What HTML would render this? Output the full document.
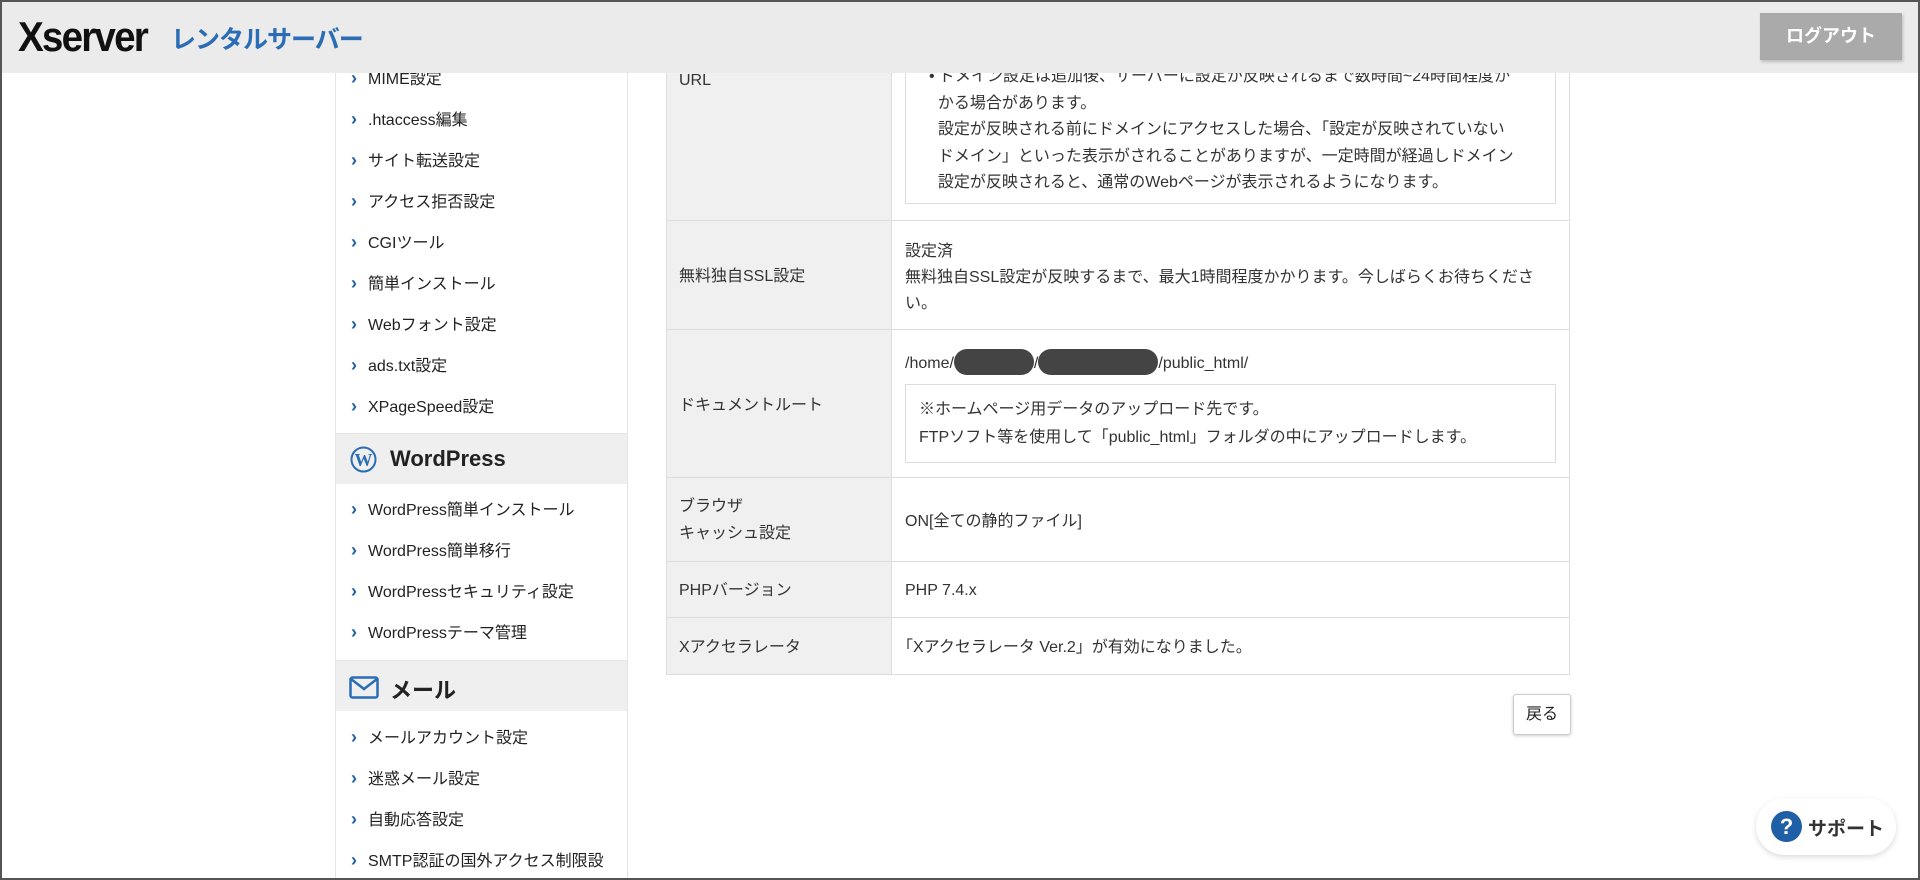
<!DOCTYPE html>
<html><head><meta charset="utf-8"><style>
*{box-sizing:border-box;margin:0;padding:0}
body{width:1920px;height:880px;overflow:hidden;background:#fff;font-family:"Liberation Sans","Noto Sans CJK JP",sans-serif;color:#333;position:relative;font-size:16px}
.frame{position:absolute;inset:0;border:2px solid #555;z-index:50;pointer-events:none}
.hdr{position:absolute;left:0;top:0;width:1920px;height:73px;background:#ebebeb;z-index:10}
.logo1{position:absolute;left:18px;top:13px;font-size:42px;font-weight:bold;color:#111;letter-spacing:-2px;transform:scaleX(0.92);transform-origin:left}
.logo2{position:absolute;left:171px;top:20px;font-size:25px;font-weight:bold;color:#2a6db5;letter-spacing:-1px}
.logout{position:absolute;left:1760px;top:13px;width:142px;height:47px;background:#aaa;color:#fff;font-weight:bold;font-size:18px;text-align:center;line-height:47px;box-shadow:1px 2px 3px rgba(0,0,0,.2)}
.side{position:absolute;left:335px;top:0;width:293px;height:880px;border-left:1px solid #e5e5e5;border-right:1px solid #e5e5e5}
.it{position:absolute;left:32px;font-size:16px;color:#222;line-height:20px}
.it:before{content:"›";position:absolute;left:-17px;top:-2px;color:#1f5fa6;font-weight:bold;font-size:18px}
.sh{position:absolute;left:0;width:291px;height:51px;background:#efefef;font-size:22px;font-weight:bold;color:#222}
.sh span{position:absolute;left:54px;top:12px}
.row{position:absolute;left:666px;width:904px;border:1px solid #ddd;border-top:none}
.th{position:absolute;left:0;top:0;bottom:0;width:225px;background:#f0f0f0;border-right:1px solid #ddd}
.tx{position:absolute;font-size:16px;color:#333;white-space:nowrap;line-height:20px}
.box{position:absolute;border:1px solid #ddd;background:#fff}
</style></head><body>
<div class="frame"></div>
<div class="hdr">
<div class="logo1">Xserver</div>
<div class="logo2">レンタルサーバー</div>
<div class="logout">ログアウト</div>
</div>

<div class="side">
<div class="it" style="top:70px">MIME設定</div>
<div class="it" style="top:111px">.htaccess編集</div>
<div class="it" style="top:152px">サイト転送設定</div>
<div class="it" style="top:193px">アクセス拒否設定</div>
<div class="it" style="top:234px">CGIツール</div>
<div class="it" style="top:275px">簡単インストール</div>
<div class="it" style="top:316px">Webフォント設定</div>
<div class="it" style="top:357px">ads.txt設定</div>
<div class="it" style="top:398px">XPageSpeed設定</div>
<div class="sh" style="top:433px;border-top:1px solid #e5e5e5"><svg style="position:absolute;left:14px;top:12px" width="27" height="27" viewBox="0 0 27 27"><circle cx="13.5" cy="13.5" r="12" fill="none" stroke="#2a6db5" stroke-width="2"/><text x="13.5" y="20" font-family="Liberation Serif,serif" font-size="18" font-weight="bold" fill="#2a6db5" text-anchor="middle">W</text></svg><span>WordPress</span></div>
<div class="it" style="top:501px">WordPress簡単インストール</div>
<div class="it" style="top:542px">WordPress簡単移行</div>
<div class="it" style="top:583px">WordPressセキュリティ設定</div>
<div class="it" style="top:624px">WordPressテーマ管理</div>
<div class="sh" style="top:660px;border-top:1px solid #e5e5e5"><svg style="position:absolute;left:13px;top:15px" width="30" height="23" viewBox="0 0 30 23"><rect x="1.5" y="1.5" width="27" height="20" rx="2" fill="none" stroke="#2a6db5" stroke-width="2.5"/><path d="M2 3 L15 13 L28 3" fill="none" stroke="#2a6db5" stroke-width="2.5"/></svg><span>メール</span></div>
<div class="it" style="top:729px">メールアカウント設定</div>
<div class="it" style="top:770px">迷惑メール設定</div>
<div class="it" style="top:811px">自動応答設定</div>
<div class="it" style="top:852px">SMTP認証の国外アクセス制限設</div>
</div>

<div class="row" style="top:0;height:221px"><div class="th"></div>
<div class="tx" style="left:12px;top:71px">URL</div>
<div class="box" style="left:238px;top:40px;width:651px;height:164px"></div>
<div class="tx" style="left:262px;top:64px;line-height:26.5px">• ドメイン設定は追加後、サーバーに設定が反映されるまで数時間~24時間程度か<br>&nbsp;&nbsp;かる場合があります。<br>&nbsp;&nbsp;設定が反映される前にドメインにアクセスした場合、「設定が反映されていない<br>&nbsp;&nbsp;ドメイン」といった表示がされることがありますが、一定時間が経過しドメイン<br>&nbsp;&nbsp;設定が反映されると、通常のWebページが表示されるようになります。</div>
</div>
<div class="row" style="top:220px;height:110px;border-top:1px solid #ddd"><div class="th"></div>
<div class="tx" style="left:12px;top:46px">無料独自SSL設定</div>
<div class="tx" style="left:238px;top:18px;line-height:26px">設定済<br>無料独自SSL設定が反映するまで、最大1時間程度かかります。今しばらくお待ちくださ<br>い。</div>
</div>
<div class="row" style="top:329px;height:149px;border-top:1px solid #ddd"><div class="th"></div>
<div class="tx" style="left:12px;top:66px">ドキュメントルート</div>
<div class="tx" style="left:238px;top:19px">/home/<span style="display:inline-block;width:80px;height:26px;background:#444;border-radius:13px;vertical-align:-7px"></span>/<span style="display:inline-block;width:120px;height:26px;background:#444;border-radius:13px;vertical-align:-7px"></span>/public_html/</div>
<div class="box" style="left:238px;top:54px;width:651px;height:79px"></div>
<div class="tx" style="left:252px;top:66px;line-height:28px">※ホームページ用データのアップロード先です。<br>FTPソフト等を使用して「public_html」フォルダの中にアップロードします。</div>
</div>
<div class="row" style="top:477px;height:85px;border-top:1px solid #ddd"><div class="th"></div>
<div class="tx" style="left:12px;top:15px;line-height:27px">ブラウザ<br>キャッシュ設定</div>
<div class="tx" style="left:238px;top:34px">ON[全ての静的ファイル]</div>
</div>
<div class="row" style="top:561px;height:57px;border-top:1px solid #ddd"><div class="th"></div>
<div class="tx" style="left:12px;top:19px">PHPバージョン</div>
<div class="tx" style="left:238px;top:19px">PHP 7.4.x</div>
</div>
<div class="row" style="top:617px;height:58px;border-top:1px solid #ddd"><div class="th"></div>
<div class="tx" style="left:12px;top:20px">Xアクセラレータ</div>
<div class="tx" style="left:230px;top:20px">「Xアクセラレータ Ver.2」が有効になりました。</div>
</div>

<div style="position:absolute;left:1513px;top:694px;width:58px;height:41px;border:1px solid #ccc;border-radius:3px;box-shadow:0 1px 3px rgba(0,0,0,.2);text-align:center;line-height:39px;font-size:16px;color:#222;background:#fff">戻る</div>

<div style="position:absolute;left:1756px;top:798px;width:140px;height:57px;border-radius:29px;background:#fff;box-shadow:0 2px 6px rgba(0,0,0,.15)">
<div style="position:absolute;left:15px;top:13px;width:31px;height:31px;border-radius:50%;background:#1f5fa6;color:#fff;font-weight:bold;font-size:22px;text-align:center;line-height:31px">?</div>
<div style="position:absolute;left:52px;top:16px;font-size:19px;font-weight:bold;color:#333">サポート</div>
</div>
</body></html>
